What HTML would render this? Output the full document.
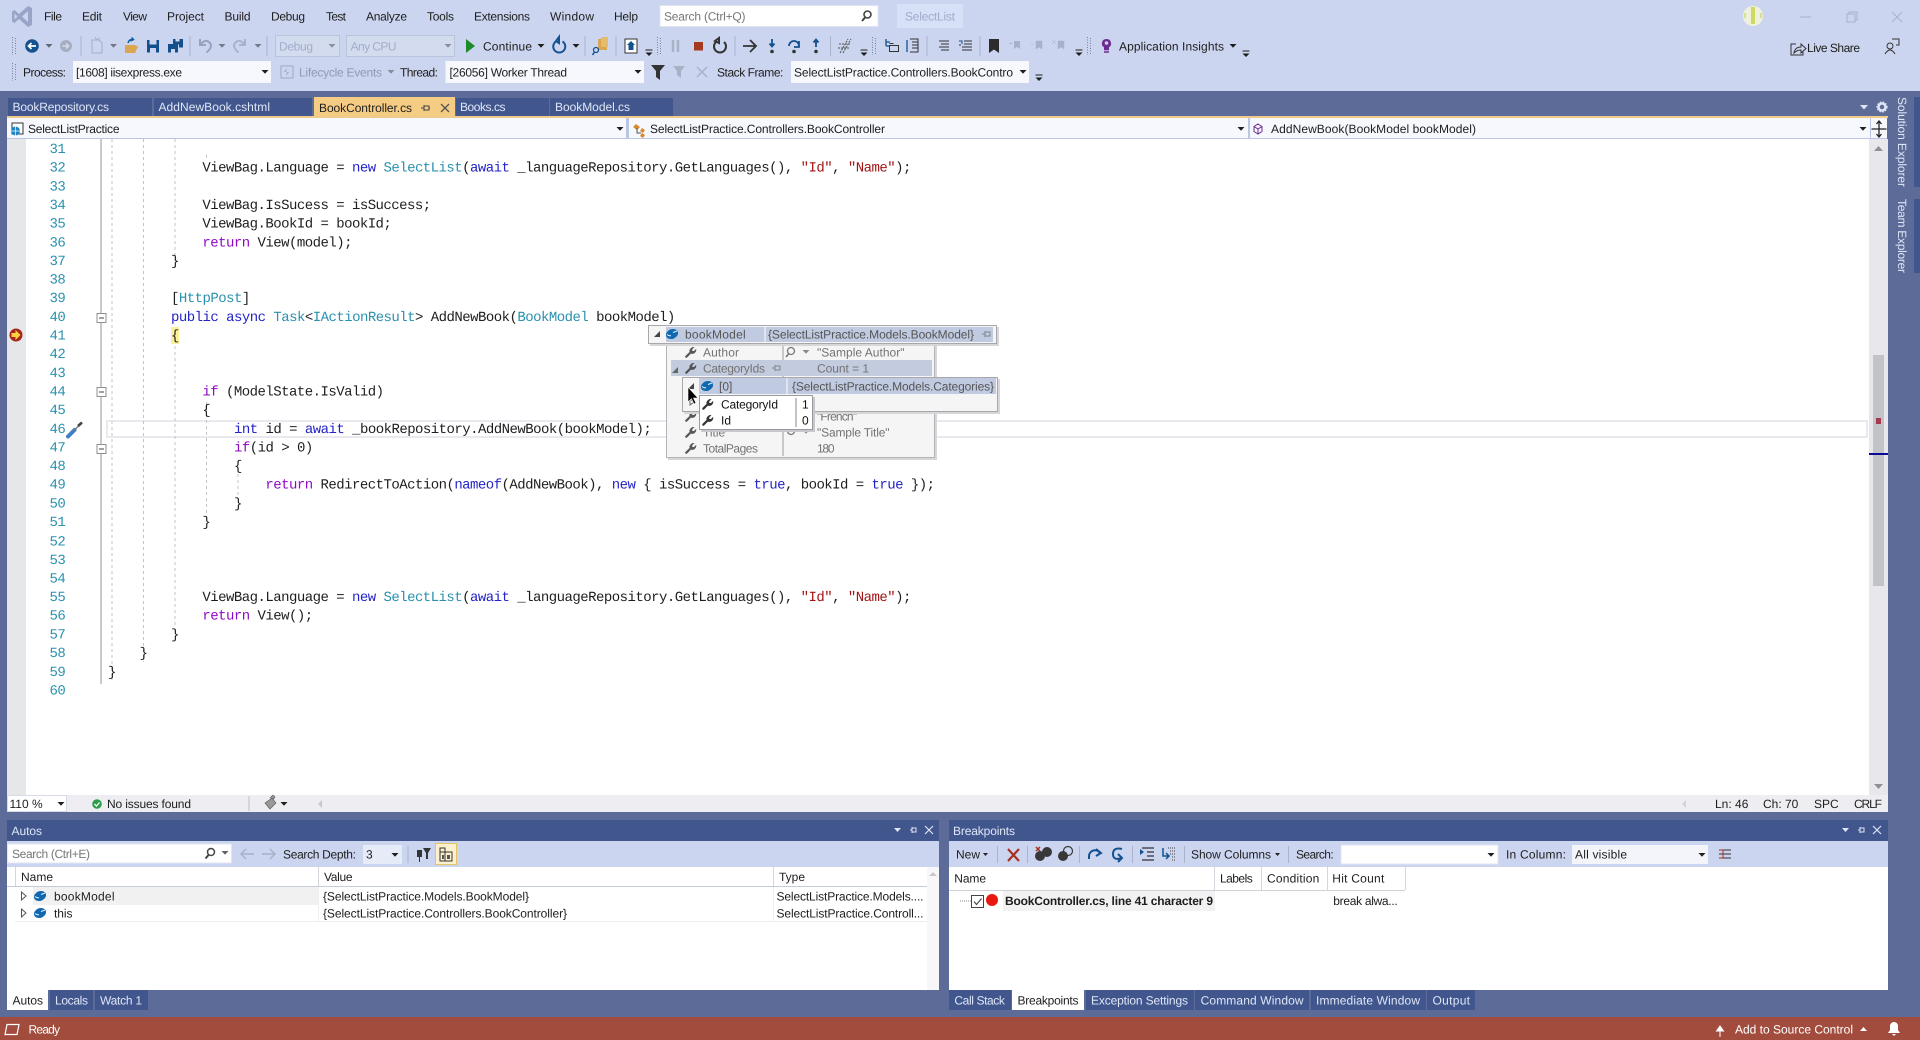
<!DOCTYPE html>
<html lang="en"><head><meta charset="utf-8"><title>SelectList - Microsoft Visual Studio</title>
<style>
html,body{margin:0;padding:0;width:1920px;height:1040px;overflow:hidden;background:#5d6b99}
svg{display:block}
text{font-family:"Liberation Sans",sans-serif;font-size:12px;fill:#1e1e1e;text-rendering:geometricPrecision;white-space:pre}
.m text,text.m{font-family:"Liberation Mono",monospace;font-size:14px;letter-spacing:-.53px;fill:#1e1e1e}
.k{fill:#2323c8}.t{fill:#2b91af}.c{fill:#8f08c4}.s{fill:#a31515}
.n text{fill:#2b91af}
.l{fill:#dfe6f7}.g{fill:#a2accb}.d{fill:#737373}
.sep{stroke:#a9b3cc;stroke-width:1}
.ig{stroke:#c4c4c4;stroke-width:1;stroke-dasharray:3 3}
</style></head><body>
<svg width="1920" height="1040" viewBox="0 0 1920 1040" xmlns="http://www.w3.org/2000/svg">
<defs>
<g id="wr"><path d="M1.300 10.700L5.500 6.500" stroke="#333" stroke-width="2.200" stroke-linecap="round"/><path d="M5 7a3.700 3.700 0 0 1 .8-4.800a3.700 3.700 0 0 1 3.700-1L7.300 3.300V5H9l2.100-2.100a3.700 3.700 0 0 1-1 3.700a3.700 3.700 0 0 1-4.100 1z" fill="#333"/></g>
<g id="ob"><ellipse cx="0" cy="0" rx="6.200" ry="4.800" fill="#0f68b0" transform="rotate(-22)"/><path d="M-5 .5q2 1.700 4 1.200M1 -1.500l4-1.500" stroke="#e8f2fb" stroke-width="1" fill="none"/></g>
<path id="ca" d="M-3.500 -2h7l-3.500 3.700z" fill="#1e1e1e"/>
<g id="dd"><path d="M-3.500 0h7" stroke="#1e1e1e"/><path d="M-3.500 2.500h7l-3.500 3.500z" fill="#1e1e1e"/></g>
<g id="grip"><path d="M-1.500 -9V9M1.500 -8V8" stroke="#76839f" stroke-dasharray="1 1.500"/></g>
<g id="pin"><path d="M-4 0h3M-1 -3v6M-1 -2h5v4h-5" fill="none" stroke="#555" stroke-width="1"/></g>
</defs>

<!-- chrome -->
<rect width="1920" height="91" fill="#ccd5f0"/>
<path d="M28 6L32 8V25L28 27L19 19L14.500 23L12 21.500V11.500L14.500 10L19 14ZM28 11L22 16.500L28 22ZM14.500 13.500V19.500L17.500 16.500Z" fill="#98a5c6" fill-rule="evenodd"/>
<text x="44" y="20.300" textLength="18">File</text><text x="82" y="20.300" textLength="20">Edit</text><text x="123" y="20.300" textLength="24">View</text><text x="167" y="20.300" textLength="37">Project</text><text x="224.500" y="20.300" textLength="26">Build</text><text x="271" y="20.300" textLength="34">Debug</text><text x="326" y="20.300" textLength="20">Test</text><text x="366" y="20.300" textLength="41">Analyze</text><text x="427" y="20.300" textLength="27">Tools</text><text x="474" y="20.300" textLength="56">Extensions</text><text x="550" y="20.300" textLength="44">Window</text><text x="614" y="20.300" textLength="24">Help</text>
<rect x="660" y="5.500" width="218" height="21" fill="#fff" stroke="#dfe4f2"/>
<text x="664" y="20.300" style="fill:#777" textLength="81.500">Search (Ctrl+Q)</text>
<circle cx="867.500" cy="14.500" r="3.500" fill="none" stroke="#444" stroke-width="1.600"/><path d="M865 17.500l-3 3.500" stroke="#444" stroke-width="2"/>
<rect x="897" y="4" width="66" height="24" fill="#d6e0f6"/><text x="905" y="20.300" class="g" textLength="50">SelectList</text>
<circle cx="1753" cy="16" r="10" fill="#eef2dc"/><path d="M1753 7v17" stroke="#cfd860" stroke-width="4"/><path d="M1745 13v5M1761 13v5" stroke="#d7e08a" stroke-width="2"/>
<path d="M1800 17h11" stroke="#a7b1c9"/><path d="M1847 14h8v8h-8zM1849 14v-2h8v8h-2" fill="none" stroke="#a7b1c9"/><path d="M1892 12l10 10M1902 12l-10 10" stroke="#a7b1c9"/>

<!-- toolbar 1 -->
<use href="#grip" x="14" y="46"/>
<circle cx="32" cy="46" r="6.800" fill="#14518f"/><path d="M36 46h-7M31.500 43l-3 3 3 3" fill="none" stroke="#fff" stroke-width="1.700"/>
<use href="#ca" x="49" y="46" opacity=".6"/>
<circle cx="66" cy="46" r="6" fill="#a6aec4"/><path d="M62.500 46h6M66 43.500l2.700 2.500-2.700 2.500" fill="none" stroke="#d6dbe9" stroke-width="1.500"/>
<line class="sep" x1="81" y1="36" x2="81" y2="56"/>
<path d="M92 40h7l3 3v10h-10z" fill="none" stroke="#a7afc5"/><path d="M95 37l2 3 3-2" stroke="#a7afc5" fill="none"/><use href="#ca" x="113.500" y="46" opacity=".5"/>
<path d="M125 45h10l3 1.500-3 6.500h-10z" fill="#d9a652"/><path d="M128 43q1-4 5-3.500M131.500 37.500l2 2-3 1.500" stroke="#0e5da3" stroke-width="1.500" fill="none"/>
<path d="M147 40h12v12.500h-12z" fill="#134f8c"/><rect x="149.500" y="40" width="7" height="4.500" fill="#ccd5f0"/><rect x="150" y="48" width="6" height="4.500" fill="#ccd5f0"/>
<path d="M168 44h10v8.500h-10z" fill="#134f8c"/><path d="M173 39h10v8.500h-4v-3h-6z" fill="#134f8c"/><rect x="175.500" y="39" width="4" height="2.500" fill="#ccd5f0"/><rect x="171" y="49" width="4" height="3.500" fill="#ccd5f0"/>
<line class="sep" x1="190" y1="36" x2="190" y2="56"/>
<path d="M200 39v6h6M200.500 44.500q5-6 9-2t-3 10" fill="none" stroke="#98a2bb" stroke-width="2"/><use href="#ca" x="222" y="46" opacity=".5"/>
<path d="M245 39v6h-6M244.500 44.500q-5-6-9-2t3 10" fill="none" stroke="#a9b2c8" stroke-width="2"/><use href="#ca" x="258" y="46" opacity=".5"/>
<line class="sep" x1="267" y1="36" x2="267" y2="56"/>
<rect x="275.500" y="35.500" width="64" height="21" fill="#d3dbee" stroke="#bac3d9"/><text x="279" y="50.300" class="g" textLength="34">Debug</text><use href="#ca" x="332" y="46" opacity=".4"/>
<rect x="346.500" y="35.500" width="108" height="21" fill="#d3dbee" stroke="#bac3d9"/><text x="350.500" y="50.300" class="g" textLength="46">Any CPU</text><use href="#ca" x="448" y="46" opacity=".4"/>
<path d="M466 39l9 7-9 7z" fill="#1f8a2c"/><text x="483" y="50.300" textLength="49">Continue</text><use href="#ca" x="541" y="46"/>
<path d="M556 41.500a6 6 0 1 0 6.500 0M559 37v6l-3-2z" fill="none" stroke="#14518f" stroke-width="2"/><use href="#ca" x="576" y="46"/>
<line class="sep" x1="585" y1="36" x2="585" y2="56"/>
<rect x="598" y="39" width="9" height="11" fill="#d9a652"/><rect x="601" y="37" width="7" height="10" fill="#e5bb6e"/><circle cx="596" cy="50" r="2.500" fill="none" stroke="#14518f" stroke-width="1.300"/><path d="M594.500 52l-2 3" stroke="#14518f" stroke-width="1.500"/>
<line class="sep" x1="616" y1="36" x2="616" y2="56"/>
<rect x="625" y="39" width="12" height="14" fill="#fff" stroke="#333"/><path d="M631 41l-4 4h1.500v5h5v-5h1.500z" fill="#14518f"/>
<use href="#dd" x="649" y="50"/><use href="#grip" x="659" y="46"/>
<path d="M673 40v12M678 40v12" stroke="#a9b1c6" stroke-width="2.500"/>
<rect x="694" y="42" width="9" height="8.500" fill="#a53a20"/>
<path d="M716 42a6 6 0 1 0 8 0M719 38v5l-4-2z" fill="none" stroke="#333" stroke-width="2"/>
<line class="sep" x1="735" y1="36" x2="735" y2="56"/>
<path d="M743 46h12M750 40l6 6-6 6" fill="none" stroke="#333" stroke-width="1.800"/>
<path d="M772 39v7M769.500 43.500l2.500 3 2.500-3" fill="none" stroke="#14518f" stroke-width="1.800"/><circle cx="772" cy="51.500" r="1.800" fill="#333"/>
<path d="M789 46a5 5 0 0 1 10 0M799 41v6h-5" fill="none" stroke="#14518f" stroke-width="1.800"/><circle cx="794" cy="51.500" r="1.800" fill="#333"/>
<path d="M816 47v-7M813.500 42.500l2.500-3 2.500 3" fill="none" stroke="#14518f" stroke-width="1.800"/><circle cx="816" cy="51.500" r="1.800" fill="#333"/>
<line class="sep" x1="830.500" y1="36" x2="830.500" y2="56"/>
<path d="M840 53l8-14M843 53l8-14M839 44h12M838 48h12" stroke="#555" fill="none" stroke-dasharray="2 1"/>
<use href="#dd" x="864" y="50"/><use href="#grip" x="874" y="46"/>
<path d="M886 39v7M886 42h4M886 46h4" stroke="#14518f" fill="none" stroke-width="1.300"/><rect x="889.500" y="45.500" width="9" height="6" fill="none" stroke="#333"/><path d="M889.500 43.500h4" stroke="#333"/>
<path d="M907 40v12" stroke="#14518f" stroke-width="1.300"/><path d="M910 39h8v13h-8M912 42h6M912 45h6M912 48h6" fill="none" stroke="#333"/>
<line class="sep" x1="927" y1="36" x2="927" y2="56"/>
<path d="M939 41h10M941 44h8M939 47h10M941 50h8" stroke="#333"/>
<path d="M959 41h3M960 44v2M964 41h8M964 44h8M962 47h10M962 50h10" stroke="#333"/><path d="M959 41h3v3" stroke="#14518f" fill="none"/>
<line class="sep" x1="980" y1="36" x2="980" y2="56"/>
<path d="M989 39h10v14l-5-3.500-5 3.500z" fill="#2c2c2c"/>
<path d="M1014 41v8l3-2 3 2v-8zM1012 44h-3l2-2" fill="#a8b1c7"/><path d="M1036 41v8l3-2 3 2v-8zM1034 44h-3" fill="#a8b1c7" stroke="#a8b1c7" stroke-width=".5"/><path d="M1058 41v8l3-2 3 2v-8zM1052 40l4 4M1056 40l-4 4" fill="#a8b1c7" stroke="#a8b1c7" stroke-width=".5"/>
<use href="#dd" x="1079" y="50"/><use href="#grip" x="1089" y="46"/>
<path d="M1106.500 39a4.500 4.500 0 0 1 2.500 8.300v3h-5v-3a4.500 4.500 0 0 1 2.500-8.300z" fill="#6c2d91"/><circle cx="1106.500" cy="43" r="1.800" fill="#ccd5f0"/><path d="M1104 52h5" stroke="#6c2d91" stroke-width="1.500"/>
<text x="1119" y="50.300" textLength="105">Application Insights</text><use href="#ca" x="1233" y="46"/><use href="#dd" x="1246" y="51"/>
<path d="M1796 44h-5v11h12v-4" fill="none" stroke="#333"/><path d="M1794 53q1-6 7-6v-3l5 4.500-5 4.500v-3q-4 0-7 3z" fill="none" stroke="#333"/>
<text x="1807" y="52" textLength="53">Live Share</text>
<circle cx="1890" cy="46" r="3" fill="none" stroke="#333"/><path d="M1885 54q5-8 10 0M1892 39h7v6h-3" fill="none" stroke="#333"/>

<!-- toolbar 2 -->
<use href="#grip" x="14" y="72"/>
<text x="23" y="76.300" textLength="43">Process:</text>
<rect x="73" y="61" width="198" height="22" fill="#f6f8fd"/><text x="76" y="76.300" textLength="106">[1608] iisexpress.exe</text><use href="#ca" x="265" y="72"/>
<rect x="281" y="66" width="12" height="12" fill="none" stroke="#a0a9c0"/><path d="M287 68l-3 4h3l-1 4 3-4h-3z" fill="#a0a9c0"/>
<text x="299" y="76.300" style="fill:#9099b3" textLength="83">Lifecycle Events</text><use href="#ca" x="391" y="72" opacity=".4"/>
<text x="400" y="76.300" textLength="38">Thread:</text>
<rect x="445.500" y="61" width="198.500" height="22" fill="#f6f8fd"/><text x="449.500" y="76.300" textLength="117.500">[26056] Worker Thread</text><use href="#ca" x="638" y="72"/>
<path d="M651 65h14l-5 6v9l-4-3v-6z" fill="#333"/>
<path d="M673 66h12l-4 5v7l-4-3v-4z" fill="#a9b1c7"/><path d="M698 68l10 10M708 68l-10 10" stroke="#a9b1c7" stroke-width="1.500" transform="translate(-1,-1)"/>
<text x="717" y="76.300" textLength="66.400">Stack Frame:</text>
<rect x="791" y="61" width="238" height="22" fill="#f6f8fd"/><text x="794" y="76.300" textLength="219">SelectListPractice.Controllers.BookContro</text><use href="#ca" x="1023" y="72"/>
<use href="#dd" x="1039" y="75"/>

<!-- tabs -->
<rect x="7" y="116" width="1881" height="2" fill="#eccb8c"/>
<g fill="#40568d"><rect x="8" y="98" width="144" height="18"/><rect x="154" y="98" width="158" height="18"/><rect x="456" y="98" width="93" height="18"/><rect x="550" y="98" width="123" height="18"/></g>
<rect x="314" y="97" width="141" height="19" fill="#f5cc84"/>
<text x="12.500" y="111" class="l" textLength="96.500">BookRepository.cs</text><text x="158.500" y="111" class="l" textLength="111.500">AddNewBook.cshtml</text><text x="319" y="112" textLength="93">BookController.cs</text><text x="460" y="111" class="l" textLength="45.500">Books.cs</text><text x="555" y="111" class="l" textLength="75">BookModel.cs</text>
<path d="M421 108h3M424 105v6M424 106h5v4h-5M429 108h1" fill="none" stroke="#444"/><path d="M441 104l8 8M449 104l-8 8" stroke="#555" stroke-width="1.300"/>
<path d="M1860 105h8l-4 4.500z" fill="#dfe6f7"/>
<circle cx="1882" cy="107" r="3.500" fill="none" stroke="#dfe6f7" stroke-width="2.500"/><circle cx="1882" cy="107" r="5" fill="none" stroke="#dfe6f7" stroke-width="1.200" stroke-dasharray="1.500 1.500"/>

<!-- nav bar -->
<rect x="7" y="118" width="1880" height="21" fill="#b9c6e4"/>
<rect x="7" y="118" width="619" height="20" fill="#f6f8fe"/><rect x="629" y="118" width="619" height="20" fill="#f6f8fe"/><rect x="1250" y="118" width="620" height="20" fill="#f6f8fe"/><rect x="1871" y="118" width="16" height="20" fill="#f6f8fe"/>
<rect x="12" y="123" width="11" height="11" fill="#fff" stroke="#333"/><circle cx="15.500" cy="131" r="4.500" fill="#1a86c8"/><path d="M11 131h9M15.500 126.500v9" stroke="#fff" stroke-width=".7"/>
<text x="28" y="133" textLength="91.500">SelectListPractice</text><use href="#ca" x="620" y="129"/>
<path d="M636 124l4 3-3 3-4-3zM642 128l3 2-2 3-3-2zM642 133l3 2-2 3-3-2z" fill="#d98a2c"/><path d="M637 128v5h4" stroke="#555" fill="none"/>
<text x="650" y="133" textLength="235">SelectListPractice.Controllers.BookController</text><use href="#ca" x="1241" y="129"/>
<path d="M1258 124l4 2.500v5l-4 2.500-4-2.500v-5zM1254 126.500l4 2.500 4-2.500M1258 129v5" fill="none" stroke="#6c2d91"/>
<text x="1271" y="133" textLength="205">AddNewBook(BookModel bookModel)</text><use href="#ca" x="1863" y="129"/>
<path d="M1871.500 129h15M1879 122v14M1876.500 124l2.500-3 2.500 3M1876.500 134l2.500 3 2.500-3" fill="none" stroke="#222" stroke-width="1.300"/>

<!-- editor -->
<rect x="7" y="139" width="1881" height="656" fill="#fff"/>
<rect x="7" y="139" width="19" height="656" fill="#e6e7e9"/>
<rect x="107" y="421" width="1760" height="16" fill="#fff" stroke="#e9e9ef" stroke-width="2"/>
<rect x="1869" y="139" width="19" height="656" fill="#e8e8ec"/>
<path d="M1878.500 146l4.500 5h-9z" fill="#8f8f95"/><path d="M1874 784h9l-4.500 5z" fill="#8f8f95"/>
<rect x="1873" y="355" width="11" height="231" fill="#c2c3c9"/><rect x="1876" y="418" width="5" height="6" fill="#a83a50"/>
<rect x="1869" y="453" width="19" height="2" fill="#0a0a96"/>
<path d="M101 139V684" stroke="#a5a5a5" stroke-width="1.200"/>
<g fill="#fff" stroke="#8f8f8f"><rect x="97" y="313.500" width="9" height="9"/><rect x="97" y="387.500" width="9" height="9"/><rect x="97" y="444.500" width="9" height="9"/></g>
<path d="M99 318h5M99 392h5M99 449h5" stroke="#444"/>
<path class="ig" d="M112 139V680"/><path class="ig" d="M143.500 139V662"/><path class="ig" d="M175 139V270M175 346V625"/><path class="ig" d="M206.500 402V514M206.500 155V160"/><path class="ig" d="M238 474V496"/>
<rect x="171" y="327" width="8" height="17" fill="#fbf09b"/>
<circle cx="16" cy="335" r="6.500" fill="#a8261c"/><path d="M11.500 333h4v-3l5 5-5 5v-3h-4z" fill="#fbd341"/>
<path d="M68 436.500l6.500-6.500" stroke="#3f7fc4" stroke-width="4" stroke-linecap="round"/><path d="M74 430.500l5-5" stroke="#777" stroke-width="1.300"/><path d="M78 426l4-3.500" stroke="#444" stroke-width="2.600"/>

<g class="n m">
<text x="49.500" y="153">31</text><text x="49.500" y="171.650">32</text><text x="49.500" y="190.300">33</text><text x="49.500" y="208.950">34</text><text x="49.500" y="227.600">35</text><text x="49.500" y="246.250">36</text><text x="49.500" y="264.900">37</text><text x="49.500" y="283.550">38</text><text x="49.500" y="302.200">39</text><text x="49.500" y="320.850">40</text><text x="49.500" y="339.500">41</text><text x="49.500" y="358.150">42</text><text x="49.500" y="376.800">43</text><text x="49.500" y="395.450">44</text><text x="49.500" y="414.100">45</text><text x="49.500" y="432.750">46</text><text x="49.500" y="451.400">47</text><text x="49.500" y="470.050">48</text><text x="49.500" y="488.700">49</text><text x="49.500" y="507.350">50</text><text x="49.500" y="526">51</text><text x="49.500" y="545.250">52</text><text x="49.500" y="563.900">53</text><text x="49.500" y="582.550">54</text><text x="49.500" y="601">55</text><text x="49.500" y="619.600">56</text><text x="49.500" y="638.300">57</text><text x="49.500" y="657.100">58</text><text x="49.500" y="675.800">59</text><text x="49.500" y="694.500">60</text>
</g>
<g class="m">
<text x="202.400" y="171.650">ViewBag.Language = <tspan class="k">new</tspan> <tspan class="t">SelectList</tspan>(<tspan class="k">await</tspan> _languageRepository.GetLanguages(), <tspan class="s">"Id"</tspan>, <tspan class="s">"Name"</tspan>);</text>
<text x="202.400" y="208.950">ViewBag.IsSucess = isSuccess;</text>
<text x="202.400" y="227.600">ViewBag.BookId = bookId;</text>
<text x="202.400" y="246.250"><tspan class="c">return</tspan> View(model);</text>
<text x="171" y="264.900">}</text>
<text x="171" y="302.200">[<tspan class="t">HttpPost</tspan>]</text>
<text x="171" y="320.850"><tspan class="k">public</tspan> <tspan class="k">async</tspan> <tspan class="t">Task</tspan>&lt;<tspan class="t">IActionResult</tspan>&gt; AddNewBook(<tspan class="t">BookModel</tspan> bookModel)</text>
<text x="171" y="339.500">{</text>
<text x="202.400" y="395.450"><tspan class="c">if</tspan> (ModelState.IsValid)</text>
<text x="202.400" y="414.100">{</text>
<text x="234" y="432.750"><tspan class="k">int</tspan> id = <tspan class="k">await</tspan> _bookRepository.AddNewBook(bookModel);</text>
<text x="234" y="451.400"><tspan class="c">if</tspan>(id &gt; 0)</text>
<text x="234" y="470.050">{</text>
<text x="265.400" y="488.700"><tspan class="c">return</tspan> RedirectToAction(<tspan class="k">nameof</tspan>(AddNewBook), <tspan class="k">new</tspan> { isSuccess = <tspan class="k">true</tspan>, bookId = <tspan class="k">true</tspan> });</text>
<text x="234" y="507.350">}</text>
<text x="202.400" y="526">}</text>
<text x="202.400" y="601">ViewBag.Language = <tspan class="k">new</tspan> <tspan class="t">SelectList</tspan>(<tspan class="k">await</tspan> _languageRepository.GetLanguages(), <tspan class="s">"Id"</tspan>, <tspan class="s">"Name"</tspan>);</text>
<text x="202.400" y="619.600"><tspan class="c">return</tspan> View();</text>
<text x="171" y="638.300">}</text>
<text x="139.500" y="657.100">}</text>
<text x="108" y="675.800">}</text>
</g>

<!-- editor status -->
<rect x="7" y="795" width="1881" height="17" fill="#eeeef2"/>
<rect x="7.500" y="795.500" width="59" height="16" fill="#fff" stroke="#d5dbe8"/><text x="9.500" y="808">110 %</text><use href="#ca" x="61" y="804"/>
<circle cx="97" cy="804" r="4.800" fill="#2d9d4a"/><path d="M94.500 804l2 2 3-3.500" fill="none" stroke="#fff" stroke-width="1.300"/>
<text x="107" y="808" textLength="84">No issues found</text>
<path d="M249 796v15" stroke="#bdbdc4"/><path d="M265 803l7-5 4 5-6 6zM270 798l3-3 2 2-2 3" fill="#999" stroke="#555" stroke-width=".6"/><use href="#ca" x="284" y="804"/>
<path d="M322 800v8l-4-4z" fill="#c6c6cc"/>
<text x="1715" y="808">Ln: 46</text><text x="1763" y="808">Ch: 70</text><text x="1814" y="808">SPC</text><text x="1854" y="808" textLength="28">CRLF</text>
<path d="M1686 800v8l-4-4z" fill="#d4d4d8"/>

<!-- tooltip layers -->
<rect x="668" y="346" width="269" height="114" fill="#d7d7da"/>
<rect x="666.500" y="344.500" width="268" height="113" fill="#f5f5f5" stroke="#b4b4b8"/>
<path d="M783 346v110" stroke="#9a9a9a"/>
<rect x="671" y="360" width="261" height="16" fill="#c3cbdf"/>
<use href="#wr" x="685" y="346" opacity=".8"/><text x="703" y="356.300" class="d" textLength="36">Author</text>
<circle cx="791" cy="351" r="3.500" fill="none" stroke="#777" stroke-width="1.300"/><path d="M788.500 354l-2.500 3" stroke="#777" stroke-width="1.600"/><use href="#ca" x="806" y="352" opacity=".5"/>
<text x="817" y="356.300" class="d" textLength="87.500">"Sample Author"</text>
<path d="M678 367v6h-6z" fill="#666"/>
<use href="#wr" x="685" y="362" opacity=".8"/><text x="703" y="372.300" class="d" textLength="62">CategoryIds</text><use href="#pin" x="776" y="368" opacity=".6"/><text x="817" y="372.300" class="d" textLength="52">Count = 1</text>
<use href="#wr" x="685" y="410" opacity=".8"/><text x="703" y="420.300" class="d">Language</text><text x="817" y="420.300" class="d" textLength="40">"French"</text>
<use href="#wr" x="685" y="426" opacity=".8"/><text x="703" y="436.300" class="d">Title</text>
<circle cx="791" cy="431" r="3.500" fill="none" stroke="#777" stroke-width="1.300"/><use href="#ca" x="806" y="432" opacity=".5"/>
<text x="817" y="436.300" class="d" textLength="72.500">"Sample Title"</text>
<use href="#wr" x="685" y="442" opacity=".8"/><text x="703" y="452.300" class="d" textLength="55">TotalPages</text><text x="817" y="452.300" class="d" textLength="17.500">180</text>

<rect x="650" y="327" width="349" height="19" fill="#d7d7da"/>
<rect x="648.500" y="325.500" width="348" height="18" fill="#f5f5f5" stroke="#a8a8ac"/>
<rect x="666" y="327" width="327" height="15" fill="#c0cae0"/>
<path d="M660 331v6h-6z" fill="#444"/><use href="#ob" x="672" y="334"/>
<text x="685" y="338.300" style="fill:#555" textLength="60.700">bookModel</text><path d="M765 327v15" stroke="#fff"/>
<text x="768" y="338.300" style="fill:#555" textLength="206">{SelectListPractice.Models.BookModel}</text><use href="#pin" x="986" y="334" opacity=".6"/>

<rect x="684" y="379" width="316" height="35" fill="#d7d7da"/>
<rect x="682.500" y="377.500" width="315" height="34" fill="#f5f5f5" stroke="#a8a8ac"/>
<rect x="699" y="378" width="297" height="16" fill="#c0cae0"/><path d="M787 378v16" stroke="#fff"/>
<path d="M694 383v6h-6z" fill="#444"/><use href="#ob" x="707" y="386"/>
<text x="719" y="390.300" style="fill:#555">[0]</text><text x="792" y="390.300" style="fill:#555" textLength="202">{SelectListPractice.Models.Categories}</text>
<path d="M690 399l4 3-4 3z" fill="none" stroke="#666"/>

<rect x="701" y="397" width="114" height="35" fill="#c8c8cc"/>
<rect x="699.500" y="395.500" width="113" height="34" fill="#fff" stroke="#9a9a9e"/>
<path d="M796 398v29" stroke="#888"/>
<use href="#wr" x="702" y="398"/><text x="721" y="408.300" style="fill:#111" textLength="57">CategoryId</text><text x="802" y="408.300" style="fill:#111">1</text>
<use href="#wr" x="702" y="414"/><text x="721" y="424.300" style="fill:#111">Id</text><text x="802" y="424.300" style="fill:#111">0</text>
<path d="M688 387v15l3.500-3.200 2.400 5.200 2-1-2.400-5h4.500z" fill="#000" stroke="#fff" stroke-width=".6"/>

<!-- autos panel -->
<rect x="7" y="820" width="932" height="21" fill="#40568d"/>
<text x="11.500" y="835" class="l" textLength="30.500">Autos</text>
<path d="M894 828h7l-3.500 4z" fill="#dfe6f7"/><path d="M910 830h2M912 827v6M912 828h4v4h-4" fill="none" stroke="#dfe6f7"/><path d="M925 826l8 8M933 826l-8 8" stroke="#dfe6f7" stroke-width="1.200"/>
<rect x="7" y="841" width="932" height="26" fill="#ccd5f0"/>
<rect x="7.500" y="844" width="224" height="19" fill="#fff" stroke="#e0e5f2"/><text x="12" y="858" style="fill:#777" textLength="78">Search (Ctrl+E)</text>
<circle cx="211" cy="852" r="3.500" fill="none" stroke="#444" stroke-width="1.500"/><path d="M208.500 855l-3 3.500" stroke="#444" stroke-width="2"/><use href="#ca" x="225" y="853" opacity=".7"/>
<path d="M254 854h-13M246 849l-5 5 5 5" fill="none" stroke="#aab2c8" stroke-width="1.500"/><path d="M262 854h13M270 849l5 5-5 5" fill="none" stroke="#aab2c8" stroke-width="1.500"/>
<text x="283" y="858.500" textLength="73">Search Depth:</text>
<rect x="363" y="845" width="39" height="19" fill="#e6ebf8"/><text x="366" y="858.500">3</text><use href="#ca" x="395" y="855"/>
<line class="sep" x1="408" y1="846" x2="408" y2="863"/>
<path d="M417 850h5v7h-2v5h-1v-5h-2zM423 848h8l-3 5v6h-2v-6z" fill="#333"/>
<rect x="435.500" y="843.500" width="21" height="21" fill="#fdf0ce" stroke="#e5c365"/><path d="M440 848h5v4h-5zM440 852h12v9h-12zM445 852v9" fill="none" stroke="#333"/><path d="M442 855h2v4h-2zM447 855h3v4h-3z" fill="#555"/>
<rect x="7" y="867" width="932" height="123" fill="#fff"/>
<path d="M7 886.500H927" stroke="#c6cbd9"/><path d="M15.500 867v19M318.500 867v19M773.500 867v19" stroke="#d4d6de"/>
<rect x="33" y="887" width="285" height="18" fill="#f1f1f1"/>
<text x="21" y="881" textLength="32">Name</text><text x="324" y="881" textLength="28.500">Value</text><text x="779" y="881">Type</text>
<path d="M21.500 892l4.500 4-4.500 4z" fill="#fff" stroke="#555"/><path d="M21.500 909l4.500 4-4.500 4z" fill="#fff" stroke="#555"/>
<use href="#ob" x="40" y="896"/><use href="#ob" x="40" y="913"/>
<text x="54" y="900.300" textLength="60.500">bookModel</text><text x="54" y="917.300" textLength="18.500">this</text>
<text x="323" y="900.300" textLength="206">{SelectListPractice.Models.BookModel}</text><text x="323" y="917.300" textLength="244">{SelectListPractice.Controllers.BookController}</text>
<text x="776.500" y="900.300" textLength="147">SelectListPractice.Models....</text><text x="776.500" y="917.300" textLength="147">SelectListPractice.Controll...</text>
<path d="M15 921.500H927" stroke="#eeeeee"/>
<path d="M318.500 887v34M773.500 887v34" stroke="#eeeeee"/>
<rect x="927" y="867" width="12" height="123" fill="#f7f7f9"/><path d="M933 872l4 4h-8z" fill="#c8c8cc"/>
<rect x="7" y="990" width="41" height="20" fill="#fff"/><rect x="50" y="990" width="43" height="20" fill="#40568d"/><rect x="95" y="990" width="53" height="20" fill="#40568d"/>
<text x="12.500" y="1004.500" textLength="30.500">Autos</text><text x="55" y="1004.500" class="l" textLength="33">Locals</text><text x="100" y="1004.500" class="l" textLength="42">Watch 1</text>

<!-- breakpoints panel -->
<rect x="949" y="820" width="940" height="21" fill="#40568d"/>
<text x="953" y="835" class="l" textLength="62">Breakpoints</text>
<path d="M1842 828h7l-3.500 4z" fill="#dfe6f7"/><path d="M1858 830h2M1860 827v6M1860 828h4v4h-4" fill="none" stroke="#dfe6f7"/><path d="M1873 826l8 8M1881 826l-8 8" stroke="#dfe6f7" stroke-width="1.200"/>
<rect x="949" y="841" width="940" height="26" fill="#ccd5f0"/>
<text x="956" y="858.500" textLength="24">New</text><path d="M983 853h5l-2.500 3z" fill="#222"/>
<line class="sep" x1="997.500" y1="846" x2="997.500" y2="863"/>
<path d="M1008 849l11 12M1019 849l-11 12" stroke="#a5301e" stroke-width="2.200"/>
<line class="sep" x1="1027.500" y1="846" x2="1027.500" y2="863"/>
<circle cx="1047" cy="852" r="5" fill="#383838"/><circle cx="1040" cy="856" r="5" fill="#383838"/><path d="M1036 847l4 4M1040 847l-4 4" stroke="#a5301e" stroke-width="1.500"/>
<circle cx="1068" cy="851" r="4.500" fill="#ccd5f0" stroke="#383838" stroke-width="1.200"/><circle cx="1063" cy="856" r="5" fill="#383838"/>
<line class="sep" x1="1079.500" y1="846" x2="1079.500" y2="863"/>
<path d="M1089 859v-3a6 6 0 0 1 11-3M1096 849l5 4-5 3" fill="none" stroke="#14518f" stroke-width="2"/>
<path d="M1122 849q-9-2-9 5t9 4M1118 854l4 4-4 4" fill="none" stroke="#14518f" stroke-width="2"/>
<line class="sep" x1="1132.500" y1="846" x2="1132.500" y2="863"/>
<path d="M1142 848h12M1147 852h7M1147 856h7M1142 860h12" stroke="#333" stroke-width="1.300"/><path d="M1140 849l4 3-4 3z" fill="#14518f"/>
<path d="M1163 848v8h5M1166 853l3 3-3 3" stroke="#14518f" stroke-width="1.500" fill="none"/><path d="M1168 848h8M1170 851h6M1170 854h6M1172 857h4M1172 860h4" stroke="#444" stroke-dasharray="1 1"/>
<line class="sep" x1="1184.500" y1="846" x2="1184.500" y2="863"/>
<text x="1191" y="858.500" textLength="80">Show Columns</text><path d="M1275 853h5l-2.500 3z" fill="#222"/>
<line class="sep" x1="1288.500" y1="846" x2="1288.500" y2="863"/>
<text x="1296" y="858.500" textLength="37.700">Search:</text>
<rect x="1341" y="845" width="157" height="19" fill="#fff" stroke="#dfe4f2"/><use href="#ca" x="1491" y="855"/>
<text x="1506" y="858.500" textLength="60">In Column:</text>
<rect x="1572" y="845" width="136" height="19" fill="#f3f5fb"/><text x="1575" y="858.500" textLength="52">All visible</text><use href="#ca" x="1702" y="855"/>
<path d="M1719 850h12M1719 854h12M1719 858h12" stroke="#333"/><path d="M1719 850h4v8h-4" stroke="#a5301e" fill="none"/>
<rect x="949" y="867" width="940" height="123" fill="#fff"/>
<path d="M949 890.500H1405" stroke="#cfd1d8"/><path d="M1214.500 867v23M1261.500 867v23M1327.500 867v23M1405.500 867v23" stroke="#d4d6de"/>
<text x="954.300" y="882.500" textLength="31.700">Name</text><text x="1220" y="882.500" textLength="32.700">Labels</text><text x="1267" y="882.500" textLength="52.300">Condition</text><text x="1332.300" y="882.500" textLength="52">Hit Count</text>
<rect x="1003" y="891" width="212" height="20" fill="#f2f2f2"/>
<path d="M960 901h11" stroke="#888" stroke-dasharray="1 1"/>
<rect x="971.500" y="895.500" width="12" height="12" fill="#fff" stroke="#444"/><path d="M974 901.500l2.500 3 5-6" fill="none" stroke="#444" stroke-width="1.100"/>
<circle cx="992" cy="900" r="6" fill="#e8170f"/>
<text x="1005" y="905" style="font-weight:bold" textLength="208">BookController.cs, line 41 character 9</text>
<text x="1333.300" y="905" textLength="64.400">break alwa...</text>
<rect x="949" y="990" width="62" height="20" fill="#40568d"/><rect x="1012" y="990" width="72" height="20" fill="#fff"/><rect x="1086" y="990" width="108" height="20" fill="#40568d"/><rect x="1195" y="990" width="114" height="20" fill="#40568d"/><rect x="1311" y="990" width="115" height="20" fill="#40568d"/><rect x="1427" y="990" width="48" height="20" fill="#40568d"/>
<text x="954.400" y="1004.500" class="l" textLength="50.500">Call Stack</text><text x="1017.500" y="1004.500" textLength="61">Breakpoints</text><text x="1091" y="1004.500" class="l" textLength="97">Exception Settings</text><text x="1200.600" y="1004.500" class="l" textLength="103">Command Window</text><text x="1316" y="1004.500" class="l" textLength="104">Immediate Window</text><text x="1432.500" y="1004.500" class="l" textLength="37.500">Output</text>

<!-- right rail -->
<rect x="1888" y="91" width="32" height="926" fill="#5d6b99"/>
<rect x="1914" y="97" width="6" height="90" fill="#40568d"/><rect x="1914" y="199" width="6" height="74" fill="#40568d"/>
<text transform="translate(1898,97) rotate(90)" class="l" textLength="90">Solution Explorer</text>
<text transform="translate(1898,199) rotate(90)" class="l" textLength="74">Team Explorer</text>

<!-- status bar -->
<rect y="1017" width="1920" height="23" fill="#a24c3e"/>
<path d="M7 1024.500h12l-2 10h-12z" fill="none" stroke="#fff" stroke-width="1.200"/>
<text x="28.500" y="1033.300" style="fill:#fff" textLength="31.500">Ready</text>
<path d="M1720 1037v-9M1716.500 1031l3.500-5 3.500 5z" stroke="#fff" fill="#fff"/>
<text x="1735" y="1033.300" style="fill:#fff" textLength="118">Add to Source Control</text>
<path d="M1860 1031h7l-3.500-4z" fill="#fff"/>
<path d="M1894 1022a4 4 0 0 1 4 4v4l2 3h-12l2-3v-4a4 4 0 0 1 4-4zM1892 1034h4l-2 2z" fill="#fff"/>
</svg>
</body></html>
